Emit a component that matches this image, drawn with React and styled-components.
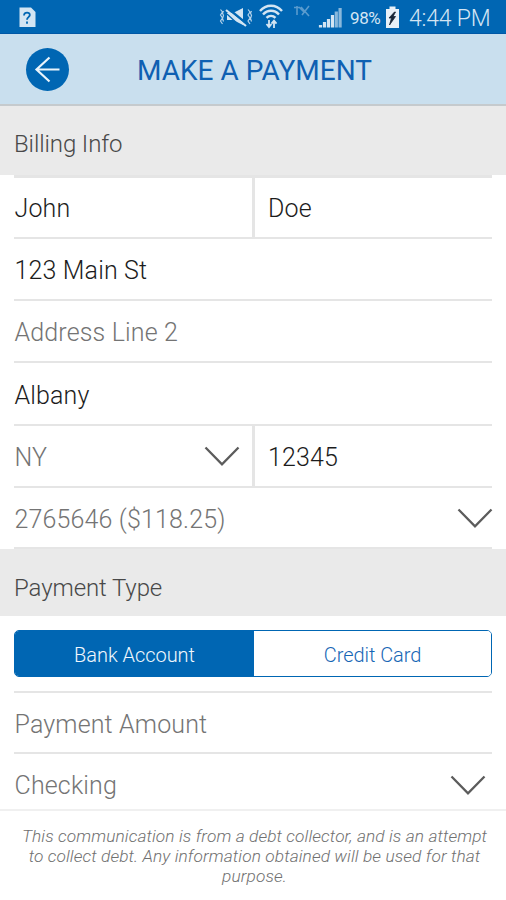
import React from "react";
import styled, { createGlobalStyle } from "styled-components";

const BLUE = "#0066b3";
const LINE = "#e5e5e5";

const GlobalStyle = createGlobalStyle`
  * { box-sizing: border-box; }
  body { margin: 0; background: #fff; font-family: Roboto, "Open Sans", sans-serif; font-weight: 300; }
`;

const Screen = styled.main`
  display: flex;
  flex-direction: column;
  width: 506px;
  height: 900px;
  overflow: hidden;
  background: #fff;
`;

const StatusBar = styled.div`
  display: flex;
  align-items: center;
  justify-content: space-between;
  flex: none;
  height: 34px;
  background: ${BLUE};
  border-bottom: 1px solid #0058a6;
  color: #d3e5f3;
`;

const StatusIcons = styled.svg`
  display: block;
  flex: none;
  width: ${(p) => p.$width}px;
  height: 33px;
`;

const StatusGroup = styled.div`
  display: flex;
  align-items: center;
  height: 33px;
`;

const Battery = styled.span`
  width: 35px;
  padding-top: 3px;
  font-size: 17px;
  font-weight: 400;
  letter-spacing: -0.4px;
  line-height: 33px;
  white-space: nowrap;
`;

const Clock = styled.span`
  width: 97px;
  padding: 3px 0 0 0;
  font-size: 23px;
  font-weight: 300;
  letter-spacing: -0.2px;
  line-height: 33px;
  white-space: nowrap;
`;

const TitleBar = styled.header`
  display: grid;
  grid-template-columns: 111px 1fr 110px;
  align-items: center;
  flex: none;
  height: 72px;
  padding-left: 26px;
  background: #c9dfee;
  border-bottom: 2px solid #c5cacd;
`;

const BackButton = styled.button`
  display: block;
  width: 43px;
  height: 43px;
  padding: 0;
  border: 0;
  border-radius: 50%;
  background: ${BLUE};
  svg { display: block; }
`;

const Title = styled.h1`
  margin: 0;
  padding-top: 3px;
  color: #0f60b2;
  font-size: 28px;
  font-weight: 400;
  letter-spacing: 0.02px;
  line-height: 34px;
  white-space: nowrap;
`;

const SectionHeading = styled.h2`
  flex: none;
  height: ${(p) => p.$height}px;
  margin: 0;
  padding: ${(p) => p.$top}px 14px 0;
  background: #eaeaea;
  color: #484848;
  font-size: 24px;
  font-weight: 300;
  line-height: 30px;
  letter-spacing: -0.1px;
`;

const Fields = styled.div`
  flex: none;
  margin: 0 14px;
  border-top: ${(p) => p.$rule}px solid ${LINE};
`;

const Row = styled.div`
  display: flex;
  height: ${(p) => p.$height}px;
  border-bottom: ${(p) => (p.$last ? 0 : 2)}px solid ${LINE};
`;

const Cell = styled.div`
  display: flex;
  align-items: center;
  justify-content: space-between;
  width: ${(p) => (p.$half ? "241px" : "auto")};
  flex: ${(p) => (p.$half ? "none" : 1)};
  padding: ${(p) => p.$top || 2}px ${(p) => p.$right || 0}px 0 ${(p) => (p.$second ? 13 : 0)}px;
  border-right: ${(p) => (p.$half ? 3 : 0)}px solid ${LINE};
`;

const Value = styled.span`
  padding: 1px 0 0 ${(p) => (p.$flush ? 0 : 0.5)}px;
  color: ${(p) => (p.$muted ? "#747474" : "#1c1c1c")};
  font-size: 25px;
  line-height: 30px;
  letter-spacing: 0.15px;
  white-space: nowrap;
`;

const ChevronIcon = styled.svg`
  display: block;
  width: 36px;
  height: 22px;
  margin-right: -1px;
`;

const Segments = styled.div`
  display: grid;
  grid-template-columns: 239px 1fr;
  flex: none;
  height: 47px;
  margin: 14px 14px;
  overflow: hidden;
  border: 1px solid ${BLUE};
  border-radius: 5px;
`;

const Segment = styled.button`
  padding: 2px 0 0;
  border: 0;
  background: ${(p) => (p.$active ? BLUE : "#fff")};
  color: ${(p) => (p.$active ? "#f0f7fd" : "#1766b5")};
  font: 300 20px/24px Roboto, sans-serif;
  letter-spacing: -0.05px;
`;

const Disclosure = styled.footer`
  flex: 1;
  padding: 15px 0 0 3px;
  border-top: 2px solid #f0f0f0;
  color: #707070;
  font-size: 17.3px;
  font-style: italic;
  line-height: 20px;
  letter-spacing: 0.1px;
  text-align: center;
  white-space: nowrap;
`;

const DisclosureLine = styled.div``;

function Chevron() {
  return (
    <ChevronIcon viewBox="0 0 36 22" fill="none" stroke="#5c5c5c" strokeWidth="2.3">
      <path d="M1.5 1.5 18 18.3 34.5 1.5" />
    </ChevronIcon>
  );
}

export default function App() {
  return (
    <Screen>
      <GlobalStyle />
      <StatusBar>
        <StatusIcons $width={60} viewBox="0 0 60 33">
          <path d="M19.5 7.5H31l4.500 4.500V27h-16z" fill="#d3e5f3" />
          <path d="M24 15.500c0-4 6.200-3.600 5.800-.3-.2 1.900-2.800 2-2.800 4.500M27 21.500v2.200" fill="none" stroke={BLUE} strokeWidth="1.8" />
        </StatusIcons>
        <StatusGroup>
          <StatusIcons $width={132} viewBox="218 0 132 33" fill="none" stroke="#d3e5f3">
            <path d="M220.500 9.500l2 2.500-2 3 2 3-2 3 2 3M223.500 11l-1 2 1 2.500-1 3 1 3M248 9.500l2 2.500-2 3 2 3-2 3 2 3M251.500 11l-1 2 1 2.500-1 3 1 3" strokeWidth="1.200" opacity=".85" />
            <path d="M227 13h6l10-5v17l-10-5h-6z" fill="#d3e5f3" stroke="none" />
            <path d="M228 8.500 247.500 24.500" stroke={BLUE} strokeWidth="2.500" />
            <path d="M226 10 246 26" strokeWidth="2.200" />
            <path d="M227 14 240 26" stroke={BLUE} strokeWidth="1.300" />
            <path d="M260 11c6-7 16-7 22 0M263 14.500c4.500-5 11.500-5 16 0M266.500 17.800c2.500-2.600 6.500-2.600 9 0" strokeWidth="2.400" />
            <path d="M269 20v7M266.500 24l2.500 3 2.500-3M274 28v-7M271.500 23.700l2.500-3 2.500 3" strokeWidth="1.800" />
            <path d="M294 7.500h5M297 6v9M301 7l8 9M309 6l-7 9M299 7l5 5" strokeWidth="1.600" opacity=".42" />
            <path d="M320.500 25v2.500M324.500 22v5.500M328.500 19v8.500M332.500 15v12.500" strokeWidth="3.200" />
            <path d="M336.300 11.500v16M340.100 8v19.500" strokeWidth="3.200" opacity=".65" />
          </StatusIcons>
          <Battery>98%</Battery>
          <StatusIcons $width={24} viewBox="385 0 24 33">
            <path d="M386 9h3.500V6.500h6V9h3.500v19h-13z" fill="#e8f1f8" />
            <path d="m394.500 12-5.500 6h2.500l-2 7 6-8.500h-2.500l2.500-4.500z" fill="#162536" stroke="#162536" strokeWidth=".8" />
          </StatusIcons>
          <Clock>4:44 PM</Clock>
        </StatusGroup>
      </StatusBar>
      <TitleBar>
        <BackButton aria-label="Back">
          <svg width="43" height="43" viewBox="0 0 43 43" fill="none" stroke="#eaf4fb" strokeWidth="2.200">
            <path d="M33.500 21.500H10.500M23.500 9.500 10.500 21.500l13 12" />
          </svg>
        </BackButton>
        <Title>MAKE A PAYMENT</Title>
      </TitleBar>

      <SectionHeading $height={69} $top={23}>Billing Info</SectionHeading>
      <Fields $rule={3}>
        <Row $height={61}>
          <Cell $half><Value>John</Value></Cell>
          <Cell $second><Value $flush>Doe</Value></Cell>
        </Row>
        <Row $height={62}><Cell><Value>123 Main St</Value></Cell></Row>
        <Row $height={62}><Cell $top={3}><Value $muted>Address Line 2</Value></Cell></Row>
        <Row $height={63}><Cell $top={4}><Value>Albany</Value></Cell></Row>
        <Row $height={62}>
          <Cell $half $right={13}><Value $muted>NY</Value><Chevron /></Cell>
          <Cell $second><Value $flush>12345</Value></Cell>
        </Row>
        <Row $height={61}><Cell $top={3}><Value $muted>2765646 ($118.25)</Value><Chevron /></Cell></Row>
      </Fields>

      <SectionHeading $height={67} $top={24}>Payment Type</SectionHeading>
      <Segments>
        <Segment $active>Bank Account</Segment>
        <Segment>Credit Card</Segment>
      </Segments>
      <Fields $rule={2}>
        <Row $height={61}><Cell $top={3}><Value $muted>Payment Amount</Value></Cell></Row>
        <Row $height={55} $last><Cell $top={8} $right={7}><Value $muted>Checking</Value><Chevron /></Cell></Row>
      </Fields>

      <Disclosure>
        <DisclosureLine>This communication is from a debt collector, and is an attempt</DisclosureLine>
        <DisclosureLine>to collect debt. Any information obtained will be used for that</DisclosureLine>
        <DisclosureLine>purpose.</DisclosureLine>
      </Disclosure>
    </Screen>
  );
}
